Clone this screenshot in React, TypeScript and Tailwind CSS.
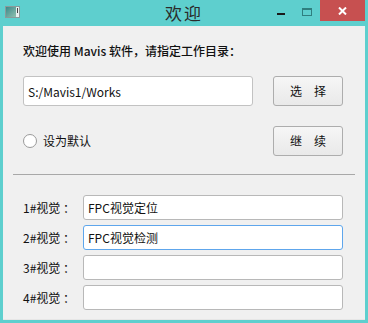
import { useState } from "react";

const font = { fontFamily: '"Noto Sans CJK SC", "Noto Sans", sans-serif' };

function TitleBar() {
    return (
        <div className="relative h-[26px] flex items-start">
            {/* app icon */}
            <div className="mt-[6px] ml-[5px] w-[15px] h-[12px] bg-[#8a9a9a] p-[1px] flex">
                <div className="w-[10px] h-full bg-gradient-to-br from-[#3a8a8a] to-[#8fc0b0]" />
                <div className="flex-1 bg-[#e8f0f0] flex flex-col justify-between items-center py-[1px]">
                    <div className="w-[1px] h-[5px] bg-[#444]" />
                </div>
            </div>
            <div className="absolute left-0 right-0 top-[2px] text-center text-[17px] leading-[22px] text-[#2b2b2b] tracking-[2px]">
                欢迎
            </div>
            <div className="ml-auto flex items-start">
                <div className="w-[26px] h-[21px] flex items-center justify-center">
                    <div className="w-[8px] h-[2px] bg-[#1a1a1a] mt-[6px]" />
                </div>
                <div className="w-[26px] h-[21px] flex items-center justify-center">
                    <div className="w-[10px] h-[8px] border border-[#2f7f7f] border-t-2 mt-[2px]" />
                </div>
                <div className="w-[45px] h-[21px] bg-[#c75050] flex items-center justify-center mr-[3px]">
                    <svg width="9" height="8" viewBox="0 0 9 8">
                        <path d="M1 0.5 L8 7.5 M8 0.5 L1 7.5" stroke="#fff" strokeWidth="2" />
                    </svg>
                </div>
            </div>
        </div>
    );
}

function Btn({ label }: { label: string }) {
    return (
        <button
            className="w-[70px] h-[30px] shrink-0 rounded-[3px] border border-[#adadad] bg-gradient-to-b from-[#f6f6f6] to-[#e9e9e9] text-[12px] text-[#111] tracking-[12px] pl-[12px]"
            style={font}
        >
            {label}
        </button>
    );
}

export default function App() {
    const [names, setNames] = useState(["FPC视觉定位", "FPC视觉检测", "", ""]);
    const [isDefault, setIsDefault] = useState(false);

    return (
        <div className="w-[368px] h-[323px] bg-[#5ecfce] flex flex-col" style={font}>
            <TitleBar />
            <div className="flex-1 mx-[3px] mb-[3px] bg-[#f0f0f0] border-b border-[#e6e6e6] flex flex-col">
                <div className="pl-[20px] pt-[17px] h-[50px] text-[12px] leading-[15px] text-[#111] font-medium">
                    欢迎使用 Mavis 软件，请指定工作目录：
                </div>
                <div className="flex items-center pl-[20px] pr-[22px] h-[30px]">
                    <input
                        className="w-[230px] h-[30px] bg-white border border-[#c2c2c2] rounded-[3px] px-[4px] text-[12px] text-[#111] outline-none"
                        defaultValue="S:/Mavis1/Works"
                        style={font}
                    />
                    <div className="ml-auto">
                        <Btn label="选择" />
                    </div>
                </div>
                <div className="flex items-center pl-[20px] pr-[22px] mt-[20px] h-[30px]">
                    <button
                        onClick={() => setIsDefault(!isDefault)}
                        className="w-[14px] h-[14px] shrink-0 rounded-full border border-[#9a9a9a] bg-white flex items-center justify-center"
                    >
                        {isDefault && <div className="w-[6px] h-[6px] rounded-full bg-[#333]" />}
                    </button>
                    <span className="ml-[6px] text-[12px] text-[#111] whitespace-nowrap">设为默认</span>
                    <div className="ml-auto">
                        <Btn label="继续" />
                    </div>
                </div>
                <div className="mx-[10px] mt-[18px] h-px bg-[#a8a8a8]" />
                <div className="flex flex-col gap-[5px] mt-[20px]">
                    {names.map((n, i) => (
                        <div key={i} className="flex items-center h-[25px] pl-[20px]">
                            <span className="w-[60px] text-[12px] text-[#111] whitespace-nowrap">{i + 1}#视觉 ：</span>
                            <input
                                className={
                                    "w-[260px] h-[25px] bg-white rounded-[3px] px-[4px] text-[12px] text-[#111] outline-none border " +
                                    (i === 1 ? "border-[#5ea6ec]" : "border-[#b8b8b8]")
                                }
                                value={n}
                                onChange={(e) => setNames(names.map((x, j) => (j === i ? e.target.value : x)))}
                                style={font}
                            />
                        </div>
                    ))}
                </div>
            </div>
        </div>
    );
}
